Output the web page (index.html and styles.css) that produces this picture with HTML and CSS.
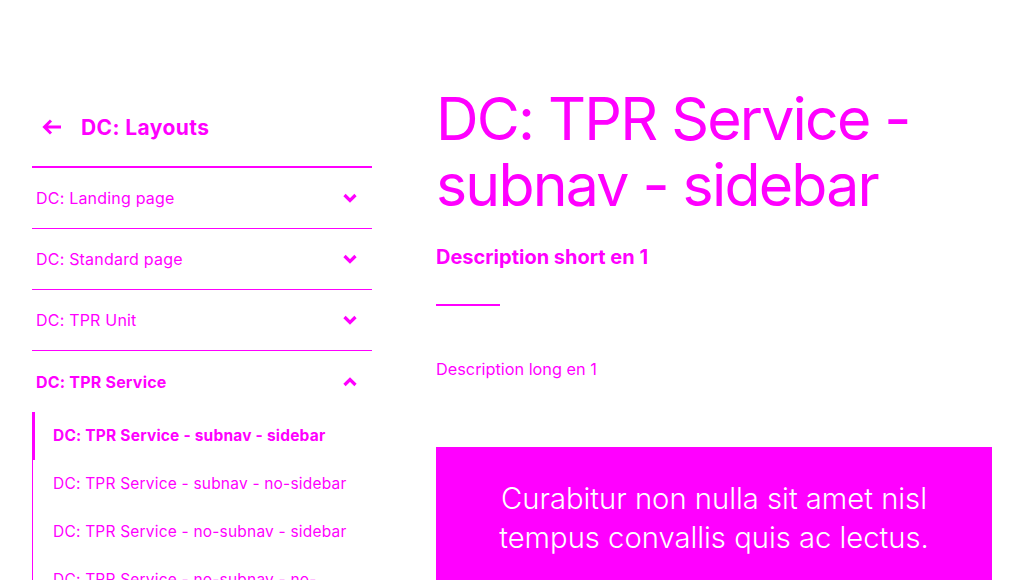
FILE: index.html
```html
<!DOCTYPE html>
<html lang="en">
<head>
<meta charset="utf-8">
<title>DC: TPR Service - subnav - sidebar</title>
<link rel="stylesheet" href="styles.css">
</head>
<body>
<div class="page">
  <aside class="sidebar">
    <a class="back" href="#">
      <svg class="back-icon" width="20" height="16" viewBox="0 0 20 16" aria-hidden="true"><path d="M19 8H3M9 1.5L2.5 8L9 14.5" fill="none" stroke="currentColor" stroke-width="3"/></svg>
      <span>DC: Layouts</span>
    </a>
    <ul class="nav">
      <li class="nav-item"><a href="#">DC: Landing page</a><svg class="chev" width="14" height="10" viewBox="0 0 14 10"><path d="M1.5 2L7 7.5L12.5 2" fill="none" stroke="currentColor" stroke-width="3.2"/></svg></li>
      <li class="nav-item"><a href="#">DC: Standard page</a><svg class="chev" width="14" height="10" viewBox="0 0 14 10"><path d="M1.5 2L7 7.5L12.5 2" fill="none" stroke="currentColor" stroke-width="3.2"/></svg></li>
      <li class="nav-item"><a href="#">DC: TPR Unit</a><svg class="chev" width="14" height="10" viewBox="0 0 14 10"><path d="M1.5 2L7 7.5L12.5 2" fill="none" stroke="currentColor" stroke-width="3.2"/></svg></li>
      <li class="nav-item open"><a href="#">DC: TPR Service</a><svg class="chev" width="14" height="10" viewBox="0 0 14 10"><path d="M1.5 8L7 2.5L12.5 8" fill="none" stroke="currentColor" stroke-width="3.2"/></svg></li>
    </ul>
    <ul class="subnav">
      <li class="sub-item active"><a href="#">DC: TPR Service - subnav - sidebar</a></li>
      <li class="sub-item"><a href="#">DC: TPR Service - subnav - no-sidebar</a></li>
      <li class="sub-item"><a href="#">DC: TPR Service - no-subnav - sidebar</a></li>
      <li class="sub-item"><a href="#">DC: TPR Service - no-subnav - no-sidebar</a></li>
    </ul>
  </aside>
  <main class="main">
    <h1 class="title">DC: TPR Service - subnav - sidebar</h1>
    <p class="short">Description short en 1</p>
    <hr class="rule">
    <p class="long">Description long en 1</p>
    <blockquote class="quote">
      <p>Curabitur non nulla sit amet nisl<br>tempus convallis quis ac lectus.</p>
      <p class="cite">Lorem ipsum dolor sit amet, elit.</p>
    </blockquote>
  </main>
</div>
</body>
</html>
```
FILE: styles.css
```css
* { box-sizing: border-box; }
html, body { margin: 0; padding: 0; background: #fff; }
body {
  font-family: Inter, "Liberation Sans", sans-serif;
  color: #ff00ff;
  overflow: hidden;
  height: 580px;
}
a { color: inherit; text-decoration: none; }
ul { list-style: none; margin: 0; padding: 0; }

.page {
  display: grid;
  grid-template-columns: 340px 1fr;
  column-gap: 64px;
  padding: 86px 32px 0;
}
.sidebar { padding-top: 2px; }

.back {
  display: flex;
  align-items: center;
  gap: 19px;
  height: 80px;
  padding-left: 10px;
  font-size: 21px;
  font-weight: 700;
  letter-spacing: 0.4px;
  border-bottom: 2px solid #ff00ff;
}
.back-icon { display: block; }

.nav-item {
  display: flex;
  align-items: center;
  justify-content: space-between;
  height: 61px;
  padding: 0 15px 0 4px;
  border-bottom: 1px solid #ff00ff;
  font-size: 16px;
  letter-spacing: 0.2px;
}
.nav-item.open { border-bottom: none; font-weight: 700; }
.chev { display: block; }

.subnav { border-left: 1px solid #ff00ff; }
.sub-item {
  padding: 14px 20px;
  font-size: 15.5px;
  letter-spacing: 0.2px;
  line-height: 20px;
}
.sub-item.active {
  font-weight: 700;
  box-shadow: inset 2px 0 0 #ff00ff;
}

.title {
  margin: 0;
  font-size: 59px;
  line-height: 66px;
  font-weight: 400;
  letter-spacing: -1.8px;
}
.short {
  margin: 26px 0 0;
  font-size: 20px;
  line-height: 26px;
  font-weight: 700;
}
.rule {
  width: 64px;
  height: 2px;
  border: 0;
  background: #ff00ff;
  margin: 34px 0 0;
}
.long {
  margin: 52px 0 0;
  font-size: 16.3px;
  line-height: 22px;
}
.quote {
  margin: 67px 0 0;
  padding: 32px 40px 40px;
  background: #ff00ff;
  color: #fff;
  text-align: center;
  font-size: 29.2px;
  line-height: 39px;
  font-weight: 300;
}
.quote p { margin: 0; }
.quote .cite { margin-top: 17px; }
```
